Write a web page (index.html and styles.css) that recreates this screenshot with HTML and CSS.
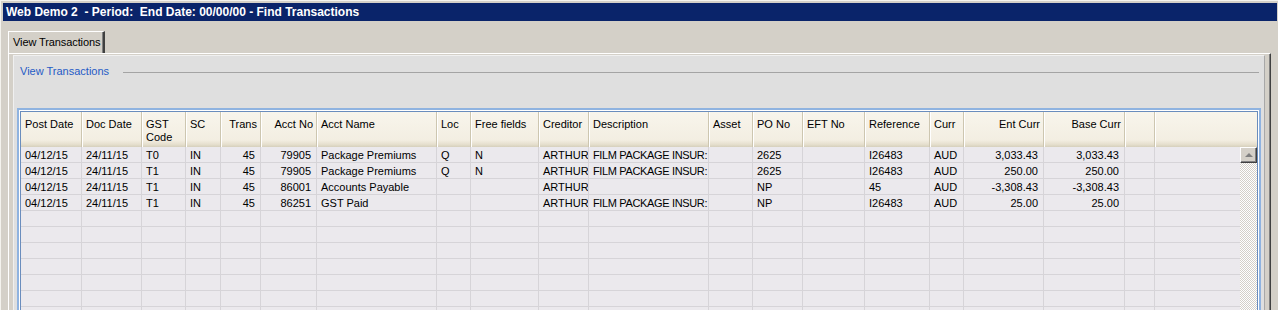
FILE: index.html
```html
<!DOCTYPE html>
<html lang="en">
<head>
    <meta charset="UTF-8">
    <title>Find Transactions</title>
    <link rel="stylesheet" href="styles.css">
</head>
<body>
    <div class="window">
        <div class="title-bar">Web Demo 2&nbsp; - Period:&nbsp; End Date: 00/00/00 - Find Transactions</div>

        <div class="tabs">
            <div class="tab">View Transactions</div>
        </div>

        <div class="tab-pane">
            <div class="group">
                <div class="legend">
                    <span class="legend-text">View Transactions</span>
                    <div class="legend-line"></div>
                </div>

                <div class="grid">
                    <div class="grid-inner">
                        <!-- header -->
                        <div class="grid-head">
                            <div class="hcell">Post Date</div>
                            <div class="hcell">Doc Date</div>
                            <div class="hcell">GST<br>Code</div>
                            <div class="hcell">SC</div>
                            <div class="hcell num">Trans</div>
                            <div class="hcell num">Acct No</div>
                            <div class="hcell">Acct Name</div>
                            <div class="hcell">Loc</div>
                            <div class="hcell">Free fields</div>
                            <div class="hcell">Creditor</div>
                            <div class="hcell">Description</div>
                            <div class="hcell">Asset</div>
                            <div class="hcell">PO No</div>
                            <div class="hcell">EFT No</div>
                            <div class="hcell">Reference</div>
                            <div class="hcell">Curr</div>
                            <div class="hcell num">Ent Curr</div>
                            <div class="hcell num">Base Curr</div>
                            <div class="hcell"></div>
                            <div class="hcell last"></div>
                        </div>

                        <div class="grid-body">
                            <div class="rows" id="rows"></div>
                            <div class="vscroll">
                                <div class="scroll-up"><span class="arrow-up"></span></div>
                            </div>
                        </div>
                    </div>
                </div>
            </div>
        </div>
    </div>

    <script>
        // 数据行
        const transactions = [
            ['04/12/15', '24/11/15', 'T0', 'IN', '45', '79905', 'Package Premiums', 'Q', 'N', 'ARTHUR', 'FILM PACKAGE INSUR:', '', '2625', '', 'I26483', 'AUD', '3,033.43', '3,033.43'],
            ['04/12/15', '24/11/15', 'T1', 'IN', '45', '79905', 'Package Premiums', 'Q', 'N', 'ARTHUR', 'FILM PACKAGE INSUR:', '', '2625', '', 'I26483', 'AUD', '250.00', '250.00'],
            ['04/12/15', '24/11/15', 'T1', 'IN', '45', '86001', 'Accounts Payable', '', '', 'ARTHUR', '', '', 'NP', '', '45', 'AUD', '-3,308.43', '-3,308.43'],
            ['04/12/15', '24/11/15', 'T1', 'IN', '45', '86251', 'GST Paid', '', '', 'ARTHUR', 'FILM PACKAGE INSUR:', '', 'NP', '', 'I26483', 'AUD', '25.00', '25.00']
        ];

        const numericCols = [4, 5, 16, 17];
        const rowsEl = document.getElementById('rows');

        for (let r = 0; r < 11; r++) {
            const row = document.createElement('div');
            row.className = 'row';
            const data = transactions[r] || [];
            for (let c = 0; c < 20; c++) {
                const cell = document.createElement('div');
                cell.className = 'cell' + (numericCols.includes(c) ? ' num' : '') + (c === 10 ? ' desc' : '') + (c === 19 ? ' last' : '');
                cell.textContent = data[c] || '';
                row.appendChild(cell);
            }
            rowsEl.appendChild(row);
        }
    </script>
</body>
</html>
```

FILE: styles.css
```css
/* 全局样式 */
* {
    margin: 0;
    padding: 0;
    box-sizing: border-box;
}

body {
    font-family: 'Liberation Sans', Arial, sans-serif;
    font-size: 11px;
    color: #000;
    background: #d4d0c8;
    height: 310px;
    overflow: hidden;
}

.window {
    border-top: 1px solid #f4f3ee;
    border-left: 1px solid #f4f3ee;
    padding: 2px 1px 0 2px;
    height: 310px;
    display: flex;
    flex-direction: column;
}

/* 标题栏 */
.title-bar {
    height: 18px;
    background: #0a246a;
    color: #fff;
    font-weight: bold;
    font-size: 12px;
    line-height: 18px;
    padding-left: 3px;
    white-space: nowrap;
}

/* 选项卡 */
.tabs {
    display: flex;
    margin-top: 10px;
    padding-left: 5px;
}

.tab {
    width: 97px;
    height: 22px;
    line-height: 21px;
    padding-left: 4px;
    background: #d4d0c8;
    border-top: 1px solid #fff;
    border-left: 1px solid #fff;
    border-right: 2px solid #404040;
    box-shadow: inset -1px 0 0 #808080;
    white-space: nowrap;
    letter-spacing: -0.1px;
}

.tab-pane {
    flex: 1;
    margin: 0 6px 0 5px;
    border-top: 1px solid #fff;
    border-left: 1px solid #fff;
    border-right: 1px solid #404040;
    box-shadow: inset -1px 0 0 #808080;
    padding: 1px 5px 0 4px;
    display: flex;
    flex-direction: column;
}

/* 分组框 */
.group {
    flex: 1;
    background: #dfdfdf;
    border: 1px solid #a8a8a8;
    border-top-color: #f0f0f0;
    border-left-color: #f0f0f0;
    border-bottom: none;
    padding: 7px 3px 0 3px;
}

.legend {
    display: flex;
    align-items: center;
    height: 16px;
    padding: 0 2px 0 3px;
}

.legend-text {
    color: #1f5bc6;
    white-space: nowrap;
}

.legend-line {
    flex: 1;
    margin-left: 14px;
    margin-top: 2px;
    border-top: 1px solid #a4a4a4;
}

/* 表格 */
.grid {
    margin-top: 29px;
    border: 2px solid #8fb3e0;
    border-bottom: none;
    padding: 1px 1px 0 1px;
    background: #fff;
}

.grid-inner {
    border: 1px solid #6a8dbd;
    border-bottom: none;
    background: #ebe9ed;
}

.grid-head,
.row {
    display: grid;
    grid-template-columns: 61px 60px 44px 35px 40px 56px 120px 34px 68px 50px 120px 44px 50px 62px 65px 34px 80px 81px 30px 1fr;
}

.grid-head {
    height: 35px;
    background: linear-gradient(to bottom, #f8f5ec 0%, #f3eee2 80%, #e6e0cf 92%, #d6d0bc 100%);
}

.hcell {
    padding: 6px 3px 0 4px;
    line-height: 13px;
    border-right: 1px solid #cdc6b0;
    box-shadow: 1px 0 0 #fff;
    white-space: nowrap;
    overflow: hidden;
}

.hcell.num {
    text-align: right;
    padding-right: 3px;
}

.hcell.last {
    border-right: none;
    box-shadow: none;
}

.grid-body {
    display: flex;
}

.rows {
    flex: 1;
}

.row {
    height: 16px;
    border-bottom: 1px solid #d6d4d8;
}

.cell {
    line-height: 14px;
    padding: 1px 4px 0 4px;
    border-right: 1px solid #d6d4d8;
    white-space: nowrap;
    overflow: hidden;
}

.cell.num {
    text-align: right;
    padding-right: 5px;
}

/* 描述列文字较长，收紧字距 */
.cell.desc {
    letter-spacing: -0.35px;
    padding-right: 0;
}

.cell.last {
    border-right: none;
}

/* 滚动条 */
.vscroll {
    width: 17px;
    background: repeating-conic-gradient(#d4d0c8 0 25%, #fff 0 50%) 0 0 / 2px 2px;
}

.scroll-up {
    height: 16px;
    background: #d4d0c8;
    border-top: 1px solid #fff;
    border-left: 1px solid #fff;
    border-right: 1px solid #404040;
    border-bottom: 1px solid #404040;
    box-shadow: inset -1px -1px 0 #808080;
    display: flex;
    align-items: center;
    justify-content: center;
}

.arrow-up {
    width: 0;
    height: 0;
    border-left: 4px solid transparent;
    border-right: 4px solid transparent;
    border-bottom: 4px solid #808080;
    margin-top: -1px;
}
```
